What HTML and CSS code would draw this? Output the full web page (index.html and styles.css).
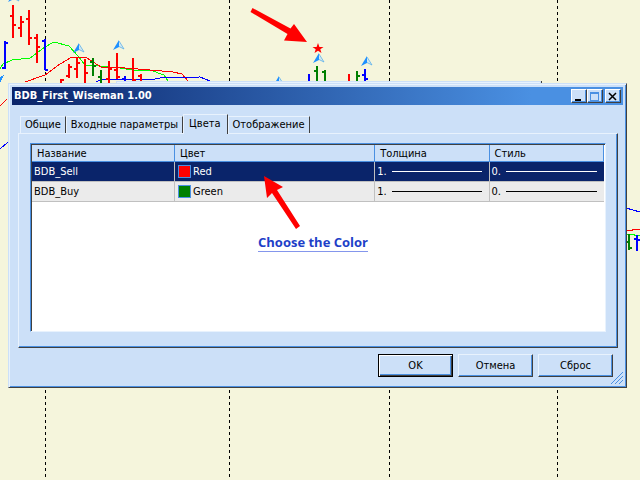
FILE: index.html
```html
<!DOCTYPE html>
<html lang="ru">
<head>
  <meta charset="UTF-8">
  <meta name="viewport" content="width=device-width, initial-scale=1.0">
  <title>BDB_First_Wiseman 1.00</title>
  <link rel="stylesheet" href="styles.css">
</head>
<body>

  <!-- price chart behind the dialog -->
  <svg class="chart" width="640" height="480" viewBox="0 0 640 480" shape-rendering="crispEdges" aria-hidden="true">
    <defs>
      <g id="fractal" shape-rendering="auto">
        <path d="M0 0L-6 10L0 7Z" fill="#1e90ff"/>
        <path d="M0 1L5 9L0 6.500" fill="#d5eaf0" stroke="#5aaeea" stroke-width="0.800"/>
      </g>
    </defs>

    <g class="grid">
      <path d="M45.500 0V480M229.500 0V480M389.500 0V480M557.500 0V480"/>
    </g>

    <g class="average">
      <path class="lime" d="M0 69L3 64L12 60L30 58L45 47L54 42L69 46L78 56L85 65L100 66L120 68L138 71L150 70L164 75L168 81"/>
      <path class="red" d="M25 82L45 75L60 64L72 57L87 58L101 67L125 68L150 70L173 72L182 74L188 81"/>
      <path class="blue" d="M96 82L103 79L122 79L150 80L160 78L200 77L210 81"/>
      <path class="red" d="M0 106L7 99M626 230.500L632 230.500L632 229.500L640 229.500"/>
      <path class="blue" d="M0 149L8 142M626 208L640 212"/>
      <path class="lime" d="M626 234.500L634 234.500L634 235.500L640 235.500"/>
    </g>

    <g class="bars">
      <path class="red" d="M13 5V38M10 16H13M13 25H16M21 16V37M18 28H21M21 22H24M29 10V45M26 19H29M29 38H32M37 34V63M34 38H37M37 47H40M61 79V84M61 80H64M69 64V78M66 76H69M69 67H72M77 57V78M74 69H77M77 63H80M85 59V84M85 73H88M109 61V84M106 79H109M109 69H112M117 53V79M114 70H117M117 77H120M133 58V84M133 80H136M141 74V81M138 76H141M349 74V84"/>
      <path class="blue" d="M5 41V69M2 68H5M5 43H8M45 39V70M42 41H45M45 70H48M125 76V81M122 79H125M309 74V84M365 69V84M362 75H365M365 79H368M637 235V251M634 239H637M637 240H640"/>
      <path class="green" d="M93 58V76M90 62H93M93 66H96M101 70V84M98 77H101M317 66V84M314 71H317M325 70V84M322 72H325M357 71V84M357 76H360M629 234V250M629 248H632M626 242H629"/>
    </g>

    <use href="#fractal" x="14" y="-8"/>
    <use href="#fractal" x="79" y="43"/>
    <use href="#fractal" x="119" y="40"/>
    <use href="#fractal" x="279" y="76"/>
    <use href="#fractal" x="319" y="53"/>
    <use href="#fractal" x="367" y="56"/>
    <path d="M4 75L0 83V77Z" fill="#1e90ff"/>

    <!-- edge of the window under the dialog -->
    <path d="M116 81H541V83H116Z" fill="#cce0f8"/>
    <path d="M117 82H540V83H117Z" fill="#e8f2fd"/>
    <path d="M541 81H542V83H541Z" fill="#404040"/>

    <g fill="#ff0000" shape-rendering="auto">
      <path d="M318 43L319.400 47H323.500L320.300 49.300L321.500 53L318 50.700L314.500 53L315.700 49.300L312.500 47H316.600Z"/>
      <path d="M252.500 8L290.500 28.500L294 24L307 42L284 40.500L287.500 34L250.500 12Z"/>
    </g>
  </svg>

  <main class="window">
    <header class="titlebar">
      <h1>BDB_First_Wiseman 1.00</h1>
      <div class="controls">
        <button type="button" aria-label="Minimize">
          <svg width="12" height="11" shape-rendering="crispEdges"><path d="M3 9H9V11H3Z" fill="#000"/></svg>
        </button>
        <button type="button" aria-label="Maximize" disabled>
          <svg width="12" height="11" shape-rendering="crispEdges"><path d="M2 2H11V11H2ZM3 4V10H10V4Z" fill="#4a90e2" fill-rule="evenodd"/></svg>
        </button>
        <button type="button" class="close" aria-label="Close">
          <svg width="12" height="11"><path d="M3 3L10 10M10 3L3 10" stroke="#000" stroke-width="1.500"/></svg>
        </button>
      </div>
    </header>

    <nav class="tabs" role="tablist">
      <button type="button" role="tab">Общие</button>
      <button type="button" role="tab">Входные параметры</button>
      <button type="button" role="tab" class="active" aria-selected="true">Цвета</button>
      <button type="button" role="tab">Отображение</button>
    </nav>

    <section class="panel" role="tabpanel">
      <div class="list">
        <table>
          <colgroup>
            <col class="col-name">
            <col class="col-color">
            <col class="col-width">
            <col class="col-style">
          </colgroup>
          <thead>
            <tr><th>Название</th><th>Цвет</th><th>Толщина</th><th>Стиль</th></tr>
          </thead>
          <tbody>
            <tr class="selected">
              <td>BDB_Sell</td>
              <td><div class="cell"><span class="swatch swatch-red"></span>Red</div></td>
              <td><div class="cell">1.<span class="line"></span></div></td>
              <td><div class="cell">0.<span class="line"></span></div></td>
            </tr>
            <tr>
              <td>BDB_Buy</td>
              <td><div class="cell"><span class="swatch swatch-green"></span>Green</div></td>
              <td><div class="cell">1.<span class="line"></span></div></td>
              <td><div class="cell">0.<span class="line"></span></div></td>
            </tr>
          </tbody>
        </table>
        <svg class="pointer" width="40" height="56" viewBox="0 0 40 56" aria-hidden="true">
          <path d="M1 1L20 12L14 15L37 51L33 54L9 18L4 23Z" fill="#ff0000"/>
        </svg>
        <p class="hint">Choose the Color</p>
      </div>
    </section>

    <footer class="actions">
      <button type="button" class="default">OK</button>
      <button type="button">Отмена</button>
      <button type="button">Сброс</button>
    </footer>

    <svg class="grip" width="12" height="12" aria-hidden="true">
      <path d="M0 12L12 0M4 12L12 4M8 12L12 8" stroke="#4a90e2"/>
    </svg>
  </main>

</body>
</html>
```

FILE: styles.css
```css
* {
  box-sizing: border-box;
}

body {
  margin: 0;
  padding: 83px 13px 0 8px;
  background-color: #f5f5dc;
  color: #000;
  font-family: "DejaVu Sans Condensed", "DejaVu Sans", Tahoma, sans-serif;
  font-size: 11px;
  line-height: 14px;
}

button {
  font: inherit;
  color: inherit;
  padding: 0;
  background-color: #cce0f8;
}

.chart {
  position: absolute;
  top: 0;
  left: 0;
}

.grid path {
  stroke: #000;
  stroke-dasharray: 3 3;
}

.average path,
.bars path {
  fill: none;
}

.bars path {
  stroke-width: 2;
}

.red {
  stroke: #ff0000;
}

.blue {
  stroke: #0000ff;
}

.green {
  stroke: #008000;
}

.lime {
  stroke: #00ff00;
}

.window {
  position: relative;
  padding: 2px;
  background-color: #cce0f8;
  border: 1px solid #cce0f8;
  border-right-color: #404040;
  border-bottom-color: #404040;
  box-shadow: inset 1px 1px #e8f2fd, inset -1px -1px #4a90e2;
}

.titlebar {
  display: flex;
  align-items: center;
  justify-content: space-between;
  height: 18px;
  margin: 1px;
  padding: 0 2px;
  background: linear-gradient(to right, #0a246a, #4a90e2 85%);
}

.titlebar h1 {
  margin: 0;
  color: #fff;
  font-size: 11px;
}

.controls {
  display: flex;
}

.controls button {
  display: flex;
  width: 16px;
  height: 14px;
  border: 1px solid #fff;
  border-right-color: #404040;
  border-bottom-color: #404040;
  box-shadow: inset -1px -1px #4a90e2;
}

.controls .close {
  margin-left: 2px;
}

.tabs {
  display: flex;
  align-items: flex-end;
  height: 27px;
  padding-left: 9px;
}

.tabs button {
  height: 17px;
  padding: 0 4px;
  border: 1px solid #e8f2fd;
  border-width: 1px 1px 0;
  border-right-color: #404040;
}

.tabs .active {
  position: relative;
  height: 20px;
  padding: 0 6px 2px 5px;
  margin-bottom: -1px;
}

.panel {
  margin: 0 6px 0 7px;
  padding: 9px 11px 15px;
  border: 1px solid #e8f2fd;
  border-right-color: #404040;
  border-bottom-color: #404040;
  box-shadow: inset -1px -1px #4a90e2;
}

.list {
  position: relative;
  height: 189px;
  background-color: #fff;
  border: 1px solid #4a90e2;
  border-right-color: #e8f2fd;
  border-bottom-color: #e8f2fd;
  box-shadow: inset 1px 1px #404040;
  padding: 1px;
}

table {
  width: 100%;
  table-layout: fixed;
  border-collapse: separate;
  border-spacing: 0;
}

.col-name {
  width: 25%;
}

.col-color {
  width: 35%;
}

.col-width {
  width: 20%;
}

.col-style {
  width: 20%;
}

th {
  height: 17px;
  padding: 2px 5px 0;
  background-color: #cce0f8;
  border-right: 1px solid #4a90e2;
  border-bottom: 1px solid #4a90e2;
  font-weight: normal;
  text-align: left;
}

td {
  height: 20px;
  padding: 0 2px;
  background-color: #ebebeb;
  border-right: 1px solid #c0c0c0;
  border-bottom: 1px solid #c0c0c0;
}

td:last-child {
  border-right: 0;
}

.selected td {
  background-color: #0a246a;
  color: #fff;
}

.cell {
  display: flex;
  align-items: center;
}

.swatch {
  width: 13px;
  height: 13px;
  margin: 0 2px 0 1px;
  border: 1px solid #4a90e2;
}

.swatch-red {
  background-color: #ff0000;
}

.swatch-green {
  background-color: #008000;
}

.line {
  flex: 1;
  height: 1px;
  margin: 0 5px;
  background-color: currentColor;
}

.pointer {
  position: absolute;
  top: 31px;
  left: 232px;
}

.hint {
  position: absolute;
  top: 90px;
  left: 227px;
  margin: 0;
  color: #1e3fc8;
  border-bottom: 1px solid #8496ec;
  font: bold 13px/17px "Open Sans", "Noto Sans", sans-serif;
}

.actions {
  display: flex;
  justify-content: flex-end;
  gap: 5px;
  padding: 6px 11px 8px;
}

.actions button {
  width: 75px;
  height: 23px;
  border: 1px solid #e8f2fd;
  border-right-color: #404040;
  border-bottom-color: #404040;
  box-shadow: inset -1px -1px #4a90e2;
}

.actions .default {
  border-color: #000;
  box-shadow: inset 1px 1px #fff, inset -1px -1px #404040, inset -2px -2px #4a90e2;
}

.grip {
  position: absolute;
  right: 3px;
  bottom: 3px;
}
```
